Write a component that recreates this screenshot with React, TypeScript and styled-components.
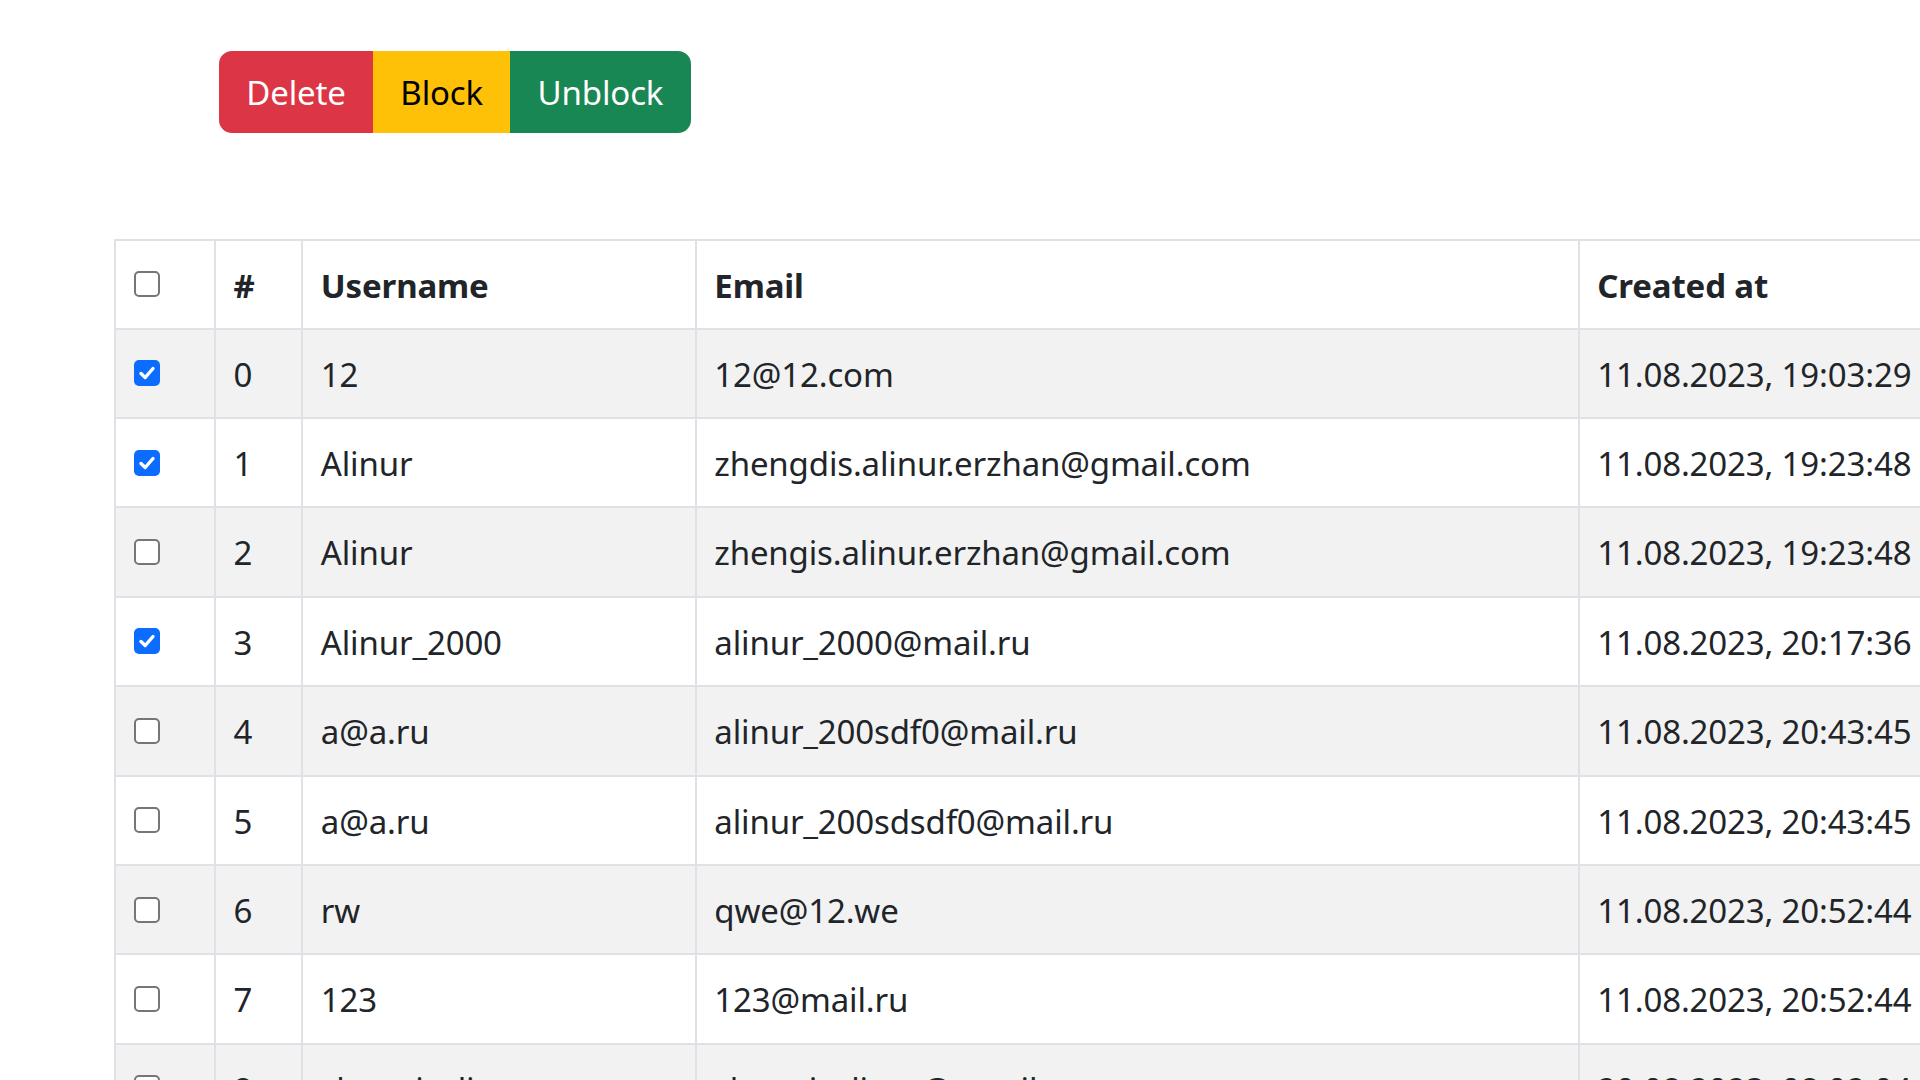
import React from "react";
import styled, { createGlobalStyle, css } from "styled-components";

const GlobalStyle = createGlobalStyle`
  html, body {
    margin: 0;
    padding: 0;
    overflow: hidden;
    background: #ffffff;
  }
  body {
    font-family: "Noto Sans", "Open Sans", "Liberation Sans", sans-serif;
    color: #212529;
    font-size: 33px;
    letter-spacing: -0.15px;
    line-height: 52.4px;
  }
`;

const Page = styled.div`
  display: flex;
  flex-direction: column;
  align-items: flex-start;
  padding: 51px 0 0 114px;
  width: 2600px;
`;

const Toolbar = styled.div`
  display: inline-flex;
  margin-left: 105px;
`;

type Variant = "danger" | "warning" | "success";

const variantStyles: Record<Variant, ReturnType<typeof css>> = {
  danger: css`
    background: #dc3545;
    border-color: #dc3545;
    color: #ffffff;
  `,
  warning: css`
    background: #ffc107;
    border-color: #ffc107;
    color: #000000;
  `,
  success: css`
    background: #198754;
    border-color: #198754;
    color: #ffffff;
  `,
};

const ActionButton = styled.button<{ $variant: Variant }>`
  font-family: inherit;
  font-size: 33px;
  letter-spacing: -0.15px;
  line-height: 52.4px;
  font-weight: 400;
  padding: 13.6px 25.3px 11.6px;
  border: 2px solid transparent;
  border-radius: 0;
  cursor: pointer;
  ${(p) => variantStyles[p.$variant]}
  &:first-child {
    border-top-left-radius: 13px;
    border-bottom-left-radius: 13px;
  }
  &:last-child {
    border-top-right-radius: 13px;
    border-bottom-right-radius: 13px;
  }
`;

const Table = styled.table`
  margin-top: 106px;
  border-collapse: collapse;
  table-layout: fixed;
  width: 2400px;
`;

const HeadCell = styled.th`
  text-align: left;
  font-weight: 700;
  padding: 19.5px 17.5px 15px;
  border: 2px solid #dee2e6;
  white-space: nowrap;
  overflow: hidden;
  vertical-align: top;
`;

const Row = styled.tr<{ $striped: boolean }>`
  background: ${(p) => (p.$striped ? "#f2f2f2" : "#ffffff")};
`;

const Cell = styled.td`
  padding: 19px 17.5px 16px;
  border: 2px solid #dee2e6;
  white-space: nowrap;
  overflow: hidden;
  vertical-align: top;
`;

const BoxWrap = styled.div<{ $shift: number }>`
  height: 52.4px;
  display: flex;
  align-items: center;
  margin-top: ${(p) => p.$shift}px;
  margin-bottom: ${(p) => -p.$shift}px;
`;

const Box = styled.span<{ $checked: boolean }>`
  width: 26px;
  height: 26px;
  box-sizing: border-box;
  border-radius: 5px;
  display: flex;
  align-items: center;
  justify-content: center;
  ${(p) =>
    p.$checked
      ? css`
          background: #0b6cff;
          border: none;
        `
      : css`
          background: #ffffff;
          border: 2.5px solid #767676;
        `}
`;

const CheckBox = ({ checked, shift }: { checked: boolean; shift: number }) => (
  <BoxWrap $shift={shift}>
    <Box $checked={checked}>
      {checked && (
        <svg width="20" height="20" viewBox="0 0 20 20">
          <path
            d="M4 10.5 L8.2 14.5 L16 5.5"
            fill="none"
            stroke="#ffffff"
            strokeWidth="3.4"
            strokeLinecap="round"
            strokeLinejoin="round"
          />
        </svg>
      )}
    </Box>
  </BoxWrap>
);

type User = {
  id: number;
  name: string;
  email: string;
  created: string;
  login: string;
  status: string;
  checked: boolean;
};

const users: User[] = [
  { id: 0, name: "12", email: "12@12.com", created: "11.08.2023, 19:03:29", login: "11.08.2023, 19:03:29", status: "active", checked: true },
  { id: 1, name: "Alinur", email: "zhengdis.alinur.erzhan@gmail.com", created: "11.08.2023, 19:23:48", login: "11.08.2023, 19:23:48", status: "active", checked: true },
  { id: 2, name: "Alinur", email: "zhengis.alinur.erzhan@gmail.com", created: "11.08.2023, 19:23:48", login: "11.08.2023, 19:23:48", status: "active", checked: false },
  { id: 3, name: "Alinur_2000", email: "alinur_2000@mail.ru", created: "11.08.2023, 20:17:36", login: "11.08.2023, 20:17:36", status: "active", checked: true },
  { id: 4, name: "a@a.ru", email: "alinur_200sdf0@mail.ru", created: "11.08.2023, 20:43:45", login: "11.08.2023, 20:43:45", status: "active", checked: false },
  { id: 5, name: "a@a.ru", email: "alinur_200sdsdf0@mail.ru", created: "11.08.2023, 20:43:45", login: "11.08.2023, 20:43:45", status: "active", checked: false },
  { id: 6, name: "rw", email: "qwe@12.we", created: "11.08.2023, 20:52:44", login: "11.08.2023, 20:52:44", status: "active", checked: false },
  { id: 7, name: "123", email: "123@mail.ru", created: "11.08.2023, 20:52:44", login: "11.08.2023, 20:52:44", status: "active", checked: false },
  { id: 8, name: "zhengisalinur", email: "zhengisalinur@gmail.com", created: "20.08.2023, 08:02:04", login: "20.08.2023, 08:02:04", status: "active", checked: false },
];

export default function App() {
  return (
    <>
      <GlobalStyle />
      <Page>
        <Toolbar>
          <ActionButton $variant="danger">Delete</ActionButton>
          <ActionButton $variant="warning">Block</ActionButton>
          <ActionButton $variant="success">Unblock</ActionButton>
        </Toolbar>
        <Table>
          <colgroup>
            <col style={{ width: "100px" }} />
            <col style={{ width: "87.3px" }} />
            <col style={{ width: "393.5px" }} />
            <col style={{ width: "883px" }} />
            <col style={{ width: "380px" }} />
            <col style={{ width: "380px" }} />
            <col style={{ width: "176.2px" }} />
          </colgroup>
          <thead>
            <tr>
              <HeadCell>
                <CheckBox checked={false} shift={-2} />
              </HeadCell>
              <HeadCell>#</HeadCell>
              <HeadCell>Username</HeadCell>
              <HeadCell>Email</HeadCell>
              <HeadCell>Created at</HeadCell>
              <HeadCell>Last login</HeadCell>
              <HeadCell>Status</HeadCell>
            </tr>
          </thead>
          <tbody>
            {users.map((u, i) => (
              <Row key={u.id} $striped={i % 2 === 0}>
                <Cell>
                  <CheckBox checked={u.checked} shift={-1.5} />
                </Cell>
                <Cell>{u.id}</Cell>
                <Cell>{u.name}</Cell>
                <Cell>{u.email}</Cell>
                <Cell>{u.created}</Cell>
                <Cell>{u.login}</Cell>
                <Cell>{u.status}</Cell>
              </Row>
            ))}
          </tbody>
        </Table>
      </Page>
    </>
  );
}
